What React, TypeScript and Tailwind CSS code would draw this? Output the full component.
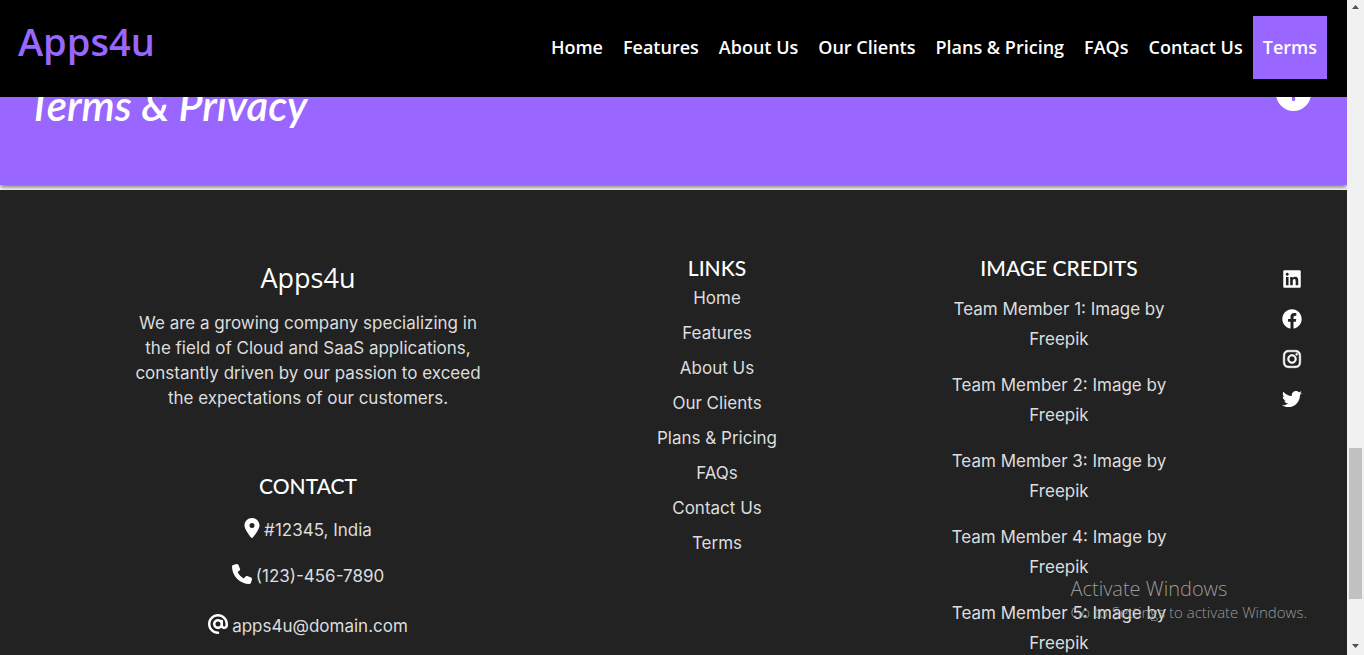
import React from "react";
import {
  FaAt,
  FaCirclePlus,
  FaInstagram,
  FaLinkedin,
  FaLocationDot,
  FaPhone,
  FaTwitter,
} from "react-icons/fa6";
import { FaFacebook } from "react-icons/fa";

const pages = [
  "Home",
  "Features",
  "About Us",
  "Our Clients",
  "Plans & Pricing",
  "FAQs",
  "Contact Us",
  "Terms",
];

const social = [
  { name: "LinkedIn", Icon: FaLinkedin, style: "size-5 text-white" },
  { name: "Facebook", Icon: FaFacebook, style: "size-5 text-white" },
  { name: "Instagram", Icon: FaInstagram, style: "size-5 stroke-white stroke-[14px] text-white" },
  { name: "Twitter", Icon: FaTwitter, style: "size-5 text-white" },
];

function Header() {
  return (
    <header className="relative z-10 flex h-[97px] shrink-0 items-start justify-between bg-black pr-5 pl-[18px] font-['Open_Sans',sans-serif]">
      <a href="#home" className="pt-4 text-[38px] leading-[50px] font-semibold text-[#9966ff]">
        Apps4u
      </a>
      <nav className="flex pt-4">
        {pages.map((page) => (
          <a
            key={page}
            href="#page"
            className={
              page === "Terms"
                ? "bg-[#9966ff] px-[10px] text-[18px] leading-[63px] font-semibold whitespace-nowrap text-white"
                : "px-[10px] text-[18px] leading-[63px] font-semibold whitespace-nowrap text-white"
            }
          >
            {page}
          </a>
        ))}
      </nav>
    </header>
  );
}

function TermsBanner() {
  return (
    <section className="relative -mt-[95px] mb-[5px] flex items-center justify-between bg-[#9966ff] py-16 pr-9 pl-7 text-white shadow-[0_2px_5px_rgba(0,0,0,0.6)]">
      <h2 className="pt-6 font-['Lato',sans-serif] text-[42px] leading-[31px] font-semibold italic">
        Terms &amp; Privacy
      </h2>
      <button type="button" aria-label="Expand" className="flex h-[55px] items-center">
        <FaCirclePlus className="size-[35px]" />
      </button>
    </section>
  );
}

function ColumnTitle({ children }: { children: React.ReactNode }) {
  return (
    <h3 className="font-['Lato',sans-serif] text-[21px] leading-[27px] font-medium text-white uppercase">
      {children}
    </h3>
  );
}

function Footer() {
  return (
    <footer className="relative grid flex-1 grid-cols-[440fr_298fr_306fr_80fr] gap-10 bg-[#222222] pt-16 pr-[15px] pl-[88px] text-center font-['Inter',sans-serif] text-[17px] text-[#dddddd]">
      <div>
        <h2 className="pt-2 font-['Open_Sans',sans-serif] text-[27px] leading-8 font-medium text-white">
          Apps4u
        </h2>
        <p className="mx-auto mt-[17px] mb-[61px] leading-[25px]">
          We are a growing company specializing in
          <br />
          the field of Cloud and SaaS applications,
          <br />
          constantly driven by our passion to exceed
          <br />
          the expectations of our customers.
        </p>
        <ColumnTitle>Contact</ColumnTitle>
        <address className="leading-[30px] not-italic">
          <p className="mt-4 flex items-center justify-center gap-1">
            <FaLocationDot className="mb-1 h-5 w-4 text-white" />
            #12345, India
          </p>
          <p className="mt-4 flex items-center justify-center gap-1">
            <FaPhone className="mb-1 size-5 text-white" />
            (123)-456-7890
          </p>
          <p className="mt-5 flex items-center justify-center gap-1">
            <FaAt className="mb-1 size-5 text-white" />
            apps4u@domain.com
          </p>
        </address>
      </div>

      <div>
        <ColumnTitle>Links</ColumnTitle>
        <ul>
          {pages.map((page) => (
            <li key={page} className="leading-[35px]">
              <a href="#page">{page}</a>
            </li>
          ))}
        </ul>
      </div>

      <div>
        <ColumnTitle>Image Credits</ColumnTitle>
        <ul className="mt-[13px] flex flex-col gap-4 leading-[30px]">
          {[1, 2, 3, 4, 5].map((member) => (
            <li key={member}>
              Team Member {member}: Image by
              <br />
              <a href="#freepik">Freepik</a>
            </li>
          ))}
        </ul>
      </div>

      <ul className="flex flex-col items-center gap-5 pt-[15px]">
        {social.map(({ name, Icon, style }) => (
          <li key={name}>
            <a href="#social" aria-label={name} className="block">
              <Icon className={style} />
            </a>
          </li>
        ))}
      </ul>
    </footer>
  );
}

function Scrollbar() {
  return (
    <div aria-hidden="true" className="flex w-[17px] shrink-0 flex-col items-center bg-[#f1f1f1]">
      <svg viewBox="0 0 17 17" className="size-[17px]">
        <path d="M5 9 8.5 5 12 9Z" fill="#505050" />
      </svg>
      <div className="flex w-[13px] flex-1 flex-col">
        <div className="grow-[431]" />
        <div className="grow-[151] bg-[#c1c1c1]" />
        <div className="grow-[39]" />
      </div>
      <svg viewBox="0 0 17 17" className="size-[17px]">
        <path d="M5 6 8.5 10 12 6Z" fill="#505050" />
      </svg>
    </div>
  );
}

export default function App() {
  return (
    <div className="relative flex h-screen overflow-hidden bg-white">
      <main className="flex min-w-0 flex-1 flex-col overflow-hidden">
        <Header />
        <TermsBanner />
        <Footer />
      </main>
      <Scrollbar />
      <div className="pointer-events-none absolute right-[57px] bottom-[34px] z-20 font-['Open_Sans',sans-serif] font-light text-[#aaaaaa]/90">
        <p className="text-[20px] leading-7">Activate Windows</p>
        <p className="text-[15px] leading-[18px]">Go to Settings to activate Windows.</p>
      </div>
    </div>
  );
}
